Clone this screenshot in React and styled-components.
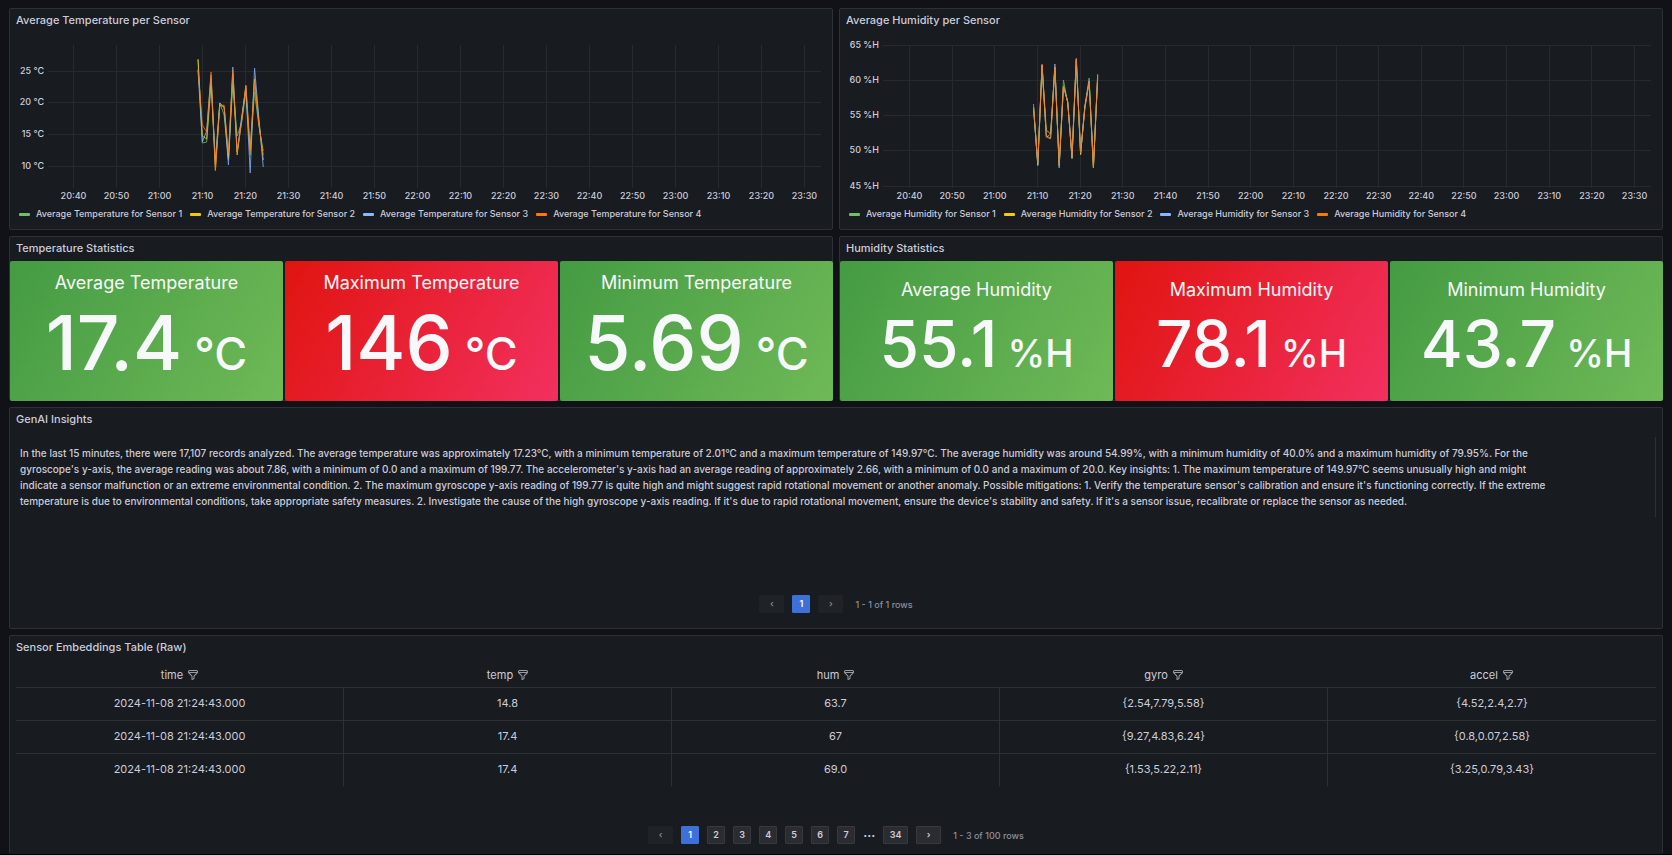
import React from "react";
import styled, { createGlobalStyle } from "styled-components";

const GlobalStyle = createGlobalStyle`
  *, *::before, *::after { box-sizing: border-box; }
  html { background: #000; }
  body {
    margin: 0;
    background: #000;
    color: #ccccdc;
    font-family: Inter, "Liberation Sans", sans-serif;
    font-size: 11px;
  }
  button { font-family: inherit; }
`;

const Page = styled.main`
  display: flex;
  flex-direction: column;
  gap: 6px;
  padding: 8px 9px 0;
  background: #111217;
`;

const Row = styled.div`
  display: grid;
  grid-template-columns: repeat(2, minmax(0, 1fr));
  gap: 6px;
`;

const Panel = styled.section`
  display: flex;
  flex-direction: column;
  min-width: 0;
  min-height: ${(p) => p.$height}px;
  background: #181b1f;
  border: 1px solid #2d3035;
  border-bottom-width: ${(p) => (p.$open ? 0 : 1)}px;
  border-radius: 2px;
`;

const PanelTitle = styled.h2`
  flex: none;
  margin: 0;
  padding: 0 6px;
  height: 24px;
  line-height: 22px;
  font-size: 11px;
  font-weight: 500;
`;

/* Time series */

const PlotFrame = styled.div`
  flex: none;
  height: 142px;
  margin: 12px 11px 0 ${(p) => p.$axis}px;

  svg {
    display: block;
    width: 100%;
    height: 100%;
    overflow: visible;
  }
`;

const GridLine = styled.line`
  stroke: #26292d;
  stroke-width: 1px;
  shape-rendering: crispEdges;
`;

const AxisText = styled.text`
  fill: #ccccdc;
  font-size: 9px;
  font-weight: 500;
`;

const SeriesLine = styled.polyline`
  fill: none;
  stroke: ${(p) => p.$color};
  stroke-width: 1px;
  stroke-linejoin: round;
  opacity: 0.8;
  vector-effect: non-scaling-stroke;
`;

const Legend = styled.ul`
  display: flex;
  gap: 8px;
  margin: 19px 0 0;
  padding: 0 9px;
  list-style: none;
  font-size: 9px;
  font-weight: 500;
  line-height: 16px;
  white-space: nowrap;
`;

const LegendItem = styled.li`
  display: flex;
  align-items: center;
  gap: 6px;
`;

const Swatch = styled.span`
  width: 11px;
  height: 3px;
  border-radius: 1px;
  background: ${(p) => p.$color};
`;

/* Stats */

const Tiles = styled.div`
  flex: 1;
  display: grid;
  grid-template-columns: repeat(3, minmax(0, 1fr));
  gap: 2px;
  margin: 0 -1px -1px 0;
`;

const Tile = styled.div`
  display: flex;
  flex-direction: column;
  align-items: center;
  justify-content: center;
  padding-top: 6px;
  border-radius: 2px;
  color: #f7f8fa;
  white-space: nowrap;
  background: ${(p) =>
    p.$tone === "red"
      ? "linear-gradient(120deg, #e0140f, #f2305f)"
      : "linear-gradient(120deg, #449b43, #6fb957)"};
`;

const TileLabel = styled.div`
  font-size: 18px;
  line-height: 28px;
`;

const TileValue = styled.div`
  font-weight: 500;
  font-size: ${(p) => (p.$large ? 75 : 64)}px;
  line-height: ${(p) => (p.$large ? 92 : 80)}px;
  white-space: pre;
`;

const TileUnit = styled.span`
  font-size: ${(p) => (p.$large ? 45 : 38)}px;
`;

/* Insights and table */

const Insight = styled.p`
  margin: 5px 6px 0 0;
  padding: 8px 95px 8px 10px;
  border-right: 1px solid #2d3035;
  font-size: 10px;
  font-weight: 500;
  line-height: 16px;
`;

const Table = styled.table`
  width: calc(100% - 12px);
  margin: 2px 6px 0;
  border-collapse: separate;
  border-spacing: 0;
  table-layout: fixed;
`;

const HeadCell = styled.th`
  height: 26px;
  padding: 0;
  font-weight: 400;
  border-bottom: 1px solid #2d3035;
`;

const HeadContent = styled.div`
  display: flex;
  align-items: center;
  justify-content: center;
  gap: 4px;
`;

const FilterButton = styled.button`
  display: flex;
  padding: 0;
  border: 0;
  background: none;
  color: #9a9ba7;
`;

const Cell = styled.td`
  height: 33px;
  padding: 0 0 2px;
  text-align: center;
  border-right: 1px solid #2d3035;
  border-bottom: 1px solid #2d3035;

  &:last-child { border-right: 0; }
  tr:last-child > & { border-bottom-color: transparent; }
`;

const Pager = styled.nav`
  display: flex;
  align-items: center;
  justify-content: center;
  gap: 8px;
  margin-top: auto;
  margin-bottom: ${(p) => p.$bottom}px;
  font-size: 9px;
  font-weight: 500;
`;

const PageButton = styled.button`
  min-width: ${(p) => (p.$arrow ? 25 : 18)}px;
  height: 18px;
  padding: 0 5px;
  border: 1px solid ${(p) => (p.$current ? "#3d71d9" : "#37393e")};
  border-radius: 1px;
  background: ${(p) => (p.$current ? "#3d71d9" : "#2a2c31")};
  color: ${(p) => (p.$current ? "#fff" : "#ccccdc")};
  font-size: 9px;
  font-weight: 600;
  line-height: 16px;

  &:disabled {
    border-color: #1f2226;
    background: #1f2226;
    color: #85868f;
  }
`;

const Ellipsis = styled.span`
  font-size: 12px;
  font-weight: 700;
`;

const RowCount = styled.span`
  margin-left: 4px;
  color: #8e8f9a;
`;

const COLORS = ["#73bf69", "#f2cc0c", "#8ab8ff", "#ff780a"];

const TIMES = Array.from({ length: 18 }, (_, i) => {
  const minutes = 20 * 60 + 40 + i * 10;
  return `${Math.floor(minutes / 60)}:${String(minutes % 60).padStart(2, "0")}`;
});

const TEMPERATURE = {
  name: "Temperature",
  axis: 38,
  width: 773,
  firstTick: 25,
  tickStep: 43,
  firstPoint: 150,
  pointStep: 4.35,
  ticks: [
    ["25 °C", 26],
    ["20 °C", 57],
    ["15 °C", 89],
    ["10 °C", 121],
  ],
  series: [
    [15, 98, 97, 40, 115, 58, 70, 115, 40, 91, 78, 48, 110, 47, 81, 106],
    [14, 91, 94, 33, 125, 60, 62, 113, 29, 110, 76, 41, 105, 34, 77, 115],
    [25, 97, 86, 30, 120, 58, 62, 120, 22, 107, 73, 43, 128, 23, 73, 122],
    [24, 80, 87, 27, 126, 61, 60, 108, 25, 107, 78, 40, 106, 38, 79, 110],
  ],
};

const HUMIDITY = {
  name: "Humidity",
  axis: 43,
  width: 768,
  firstTick: 26,
  tickStep: 42.65,
  firstPoint: 150.5,
  pointStep: 4.28,
  ticks: [
    ["65 %H", 0],
    ["60 %H", 35],
    ["55 %H", 70],
    ["50 %H", 105],
    ["45 %H", 141],
  ],
  series: [
    [59, 121, 20, 92, 89, 22, 121, 35, 58, 114, 15, 109, 61, 33, 122, 33],
    [62, 119, 20, 85, 89, 22, 120, 41, 57, 112, 14, 110, 62, 37, 123, 30],
    [63, 120, 22, 91, 93, 19, 123, 41, 57, 113, 15, 108, 62, 36, 121, 32],
    [62, 118, 19, 92, 94, 22, 120, 41, 57, 112, 13, 108, 64, 37, 123, 29],
  ],
};

const STATS = [
  {
    title: "Temperature Statistics",
    large: true,
    unit: "°C",
    tiles: [
      ["Average Temperature", "17.4", "green"],
      ["Maximum Temperature", "146", "red"],
      ["Minimum Temperature", "5.69", "green"],
    ],
  },
  {
    title: "Humidity Statistics",
    large: false,
    unit: "%H",
    tiles: [
      ["Average Humidity", "55.1", "green"],
      ["Maximum Humidity", "78.1", "red"],
      ["Minimum Humidity", "43.7", "green"],
    ],
  },
];

const COLUMNS = ["time", "temp", "hum", "gyro", "accel"];
const RECORDS = [
  ["2024-11-08 21:24:43.000", "14.8", "63.7", "{2.54,7.79,5.58}", "{4.52,2.4,2.7}"],
  ["2024-11-08 21:24:43.000", "17.4", "67", "{9.27,4.83,6.24}", "{0.8,0.07,2.58}"],
  ["2024-11-08 21:24:43.000", "17.4", "69.0", "{1.53,5.22,2.11}", "{3.25,0.79,3.43}"],
];

function TimeSeries({ data }) {
  const percent = (x) => `${(x / data.width) * 100}%`;
  return (
    <Panel $height={222}>
      <PanelTitle>Average {data.name} per Sensor</PanelTitle>
      <PlotFrame $axis={data.axis}>
        <svg role="img" aria-label={`Average ${data.name} per Sensor`}>
          {data.ticks.map(([label, y]) => (
            <g key={label}>
              <GridLine x1="0" x2="100%" y1={y + 0.5} y2={y + 0.5} />
              <AxisText x="-4" y={y + 3} textAnchor="end">{label}</AxisText>
            </g>
          ))}
          {TIMES.map((time, i) => {
            const x = percent(data.firstTick + i * data.tickStep + 0.5);
            return (
              <g key={time}>
                <GridLine x1={x} x2={x} y1="0" y2="143" />
                <AxisText x={x} y="154" textAnchor="middle">{time}</AxisText>
              </g>
            );
          })}
          <svg width="100%" height="142" viewBox={`0 0 ${data.width} 142`} preserveAspectRatio="none">
            {data.series.map((values, i) => (
              <SeriesLine
                key={COLORS[i]}
                $color={COLORS[i]}
                points={values
                  .map((y, n) => `${data.firstPoint + n * data.pointStep},${y}`)
                  .join(" ")}
              />
            ))}
          </svg>
        </svg>
      </PlotFrame>
      <Legend>
        {COLORS.map((color, i) => (
          <LegendItem key={color}>
            <Swatch $color={color} />
            Average {data.name} for Sensor {i + 1}
          </LegendItem>
        ))}
      </Legend>
    </Panel>
  );
}

function StatPanel({ title, large, unit, tiles }) {
  return (
    <Panel $height={165}>
      <PanelTitle>{title}</PanelTitle>
      <Tiles>
        {tiles.map(([label, value, tone]) => (
          <Tile key={label} $tone={tone}>
            <TileLabel>{label}</TileLabel>
            <TileValue $large={large}>
              {value}
              <TileUnit $large={large}> {unit}</TileUnit>
            </TileValue>
          </Tile>
        ))}
      </Tiles>
    </Panel>
  );
}

function FilterIcon() {
  return (
    <svg width="12" height="12" viewBox="0 0 24 24" fill="currentColor" aria-hidden="true">
      <path d="M19,2H5A3,3,0,0,0,2,5V6.17a3,3,0,0,0,.25,1.2l0,.06a2.81,2.81,0,0,0,.59.86L9,14.41V21a1,1,0,0,0,.47.85A1,1,0,0,0,10,22a1,1,0,0,0,.45-.11l4-2A1,1,0,0,0,15,19V14.41l6.12-6.12a2.81,2.81,0,0,0,.59-.86l0-.06A3,3,0,0,0,22,6.17V5A3,3,0,0,0,19,2ZM13.29,13.29A1,1,0,0,0,13,14v4.38l-2,1V14a1,1,0,0,0-.29-.71L5.41,8H18.59ZM20,6H4V5A1,1,0,0,1,5,4H19a1,1,0,0,1,1,1Z" />
    </svg>
  );
}

function Pagination({ pages, more, summary, bottom, label }) {
  return (
    <Pager $bottom={bottom} aria-label={label}>
      <PageButton $arrow disabled aria-label="Previous page">‹</PageButton>
      {pages.map((page) => (
        <PageButton key={page} $current={page === 1} aria-current={page === 1 ? "page" : undefined}>
          {page}
        </PageButton>
      ))}
      {more && <Ellipsis>···</Ellipsis>}
      {more && <PageButton $arrow>{more}</PageButton>}
      <PageButton $arrow disabled={!more} aria-label="Next page">›</PageButton>
      <RowCount>{summary}</RowCount>
    </Pager>
  );
}

export default function App() {
  return (
    <>
      <GlobalStyle />
      <Page>
        <Row>
          <TimeSeries data={TEMPERATURE} />
          <TimeSeries data={HUMIDITY} />
        </Row>
        <Row>
          {STATS.map((stat) => (
            <StatPanel key={stat.title} {...stat} />
          ))}
        </Row>
        <Panel $height={222}>
          <PanelTitle>GenAI Insights</PanelTitle>
          <Insight>
            In the last 15 minutes, there were 17,107 records analyzed. The average temperature was
            approximately 17.23°C, with a minimum temperature of 2.01°C and a maximum temperature of
            149.97°C. The average humidity was around 54.99%, with a minimum humidity of 40.0% and a
            maximum humidity of 79.95%. For the gyroscope's y-axis, the average reading was about
            7.86, with a minimum of 0.0 and a maximum of 199.77. The accelerometer's y-axis had an
            average reading of approximately 2.66, with a minimum of 0.0 and a maximum of 20.0. Key
            insights: 1. The maximum temperature of 149.97°C seems unusually high and might indicate
            a sensor malfunction or an extreme environmental condition. 2. The maximum gyroscope
            y-axis reading of 199.77 is quite high and might suggest rapid rotational movement or
            another anomaly. Possible mitigations: 1. Verify the temperature sensor's calibration
            and ensure it's functioning correctly. If the extreme temperature is due to
            environmental conditions, take appropriate safety measures. 2. Investigate the cause of
            the high gyroscope y-axis reading. If it's due to rapid rotational movement, ensure the
            device's stability and safety. If it's a sensor issue, recalibrate or replace the sensor
            as needed.
          </Insight>
          <Pagination pages={[1]} summary="1 - 1 of 1 rows" bottom={15} label="Insights pages" />
        </Panel>
        <Panel $height={219} $open>
          <PanelTitle>Sensor Embeddings Table (Raw)</PanelTitle>
          <Table>
            <thead>
              <tr>
                {COLUMNS.map((name) => (
                  <HeadCell key={name} scope="col">
                    <HeadContent>
                      {name}
                      <FilterButton aria-label={`Filter ${name}`}>
                        <FilterIcon />
                      </FilterButton>
                    </HeadContent>
                  </HeadCell>
                ))}
              </tr>
            </thead>
            <tbody>
              {RECORDS.map((record, i) => (
                <tr key={i}>
                  {record.map((value, n) => (
                    <Cell key={COLUMNS[n]}>{value}</Cell>
                  ))}
                </tr>
              ))}
            </tbody>
          </Table>
          <Pagination
            pages={[1, 2, 3, 4, 5, 6, 7]}
            more={34}
            summary="1 - 3 of 100 rows"
            bottom={10}
            label="Table pages"
          />
        </Panel>
      </Page>
    </>
  );
}
